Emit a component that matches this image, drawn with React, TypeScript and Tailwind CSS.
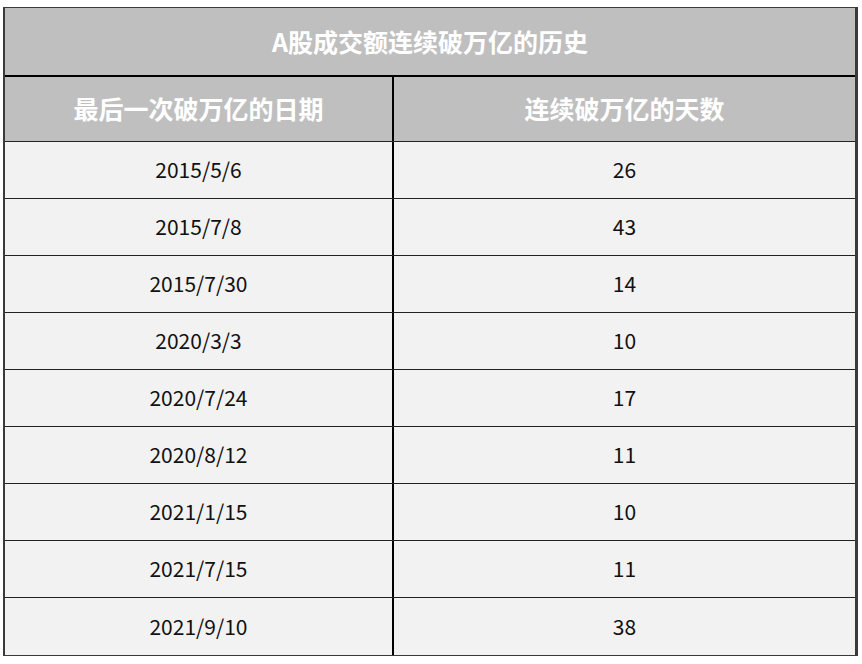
const rows: [string, string][] = [
  ["2015/5/6", "26"],
  ["2015/7/8", "43"],
  ["2015/7/30", "14"],
  ["2020/3/3", "10"],
  ["2020/7/24", "17"],
  ["2020/8/12", "11"],
  ["2021/1/15", "10"],
  ["2021/7/15", "11"],
  ["2021/9/10", "38"],
];

export default function App() {
  return (
    <div
      className="w-[862px] h-[664px] bg-white pt-[7px] pl-[3px]"
      style={{ fontFamily: '"Noto Sans CJK SC", "Noto Sans", sans-serif' }}
    >
      <div className="w-[855px] border-t border-b border-l-2 border-r-[3px] border-[#3a3a3a]">
        <div className="h-[69px] bg-[#bfbfbf] border-b-2 border-black flex items-center justify-center text-white text-[25px] font-bold">
          A股成交额连续破万亿的历史
        </div>
        <div className="grid grid-cols-[389px_1fr] h-[65px] bg-[#bfbfbf] border-b border-[#222] text-white text-[25px] font-bold">
          <div className="flex items-center justify-center border-r-2 border-black">最后一次破万亿的日期</div>
          <div className="flex items-center justify-center">连续破万亿的天数</div>
        </div>
        {rows.map(([d, n], i) => (
          <div
            key={d}
            className={
              "grid grid-cols-[389px_1fr] h-[57px] bg-[#f2f2f2] text-[21px] text-[#111] " +
              (i < rows.length - 1 ? "border-b border-[#222]" : "")
            }
          >
            <div className="flex items-center justify-center border-r-2 border-black">{d}</div>
            <div className="flex items-center justify-center">{n}</div>
          </div>
        ))}
      </div>
    </div>
  );
}
